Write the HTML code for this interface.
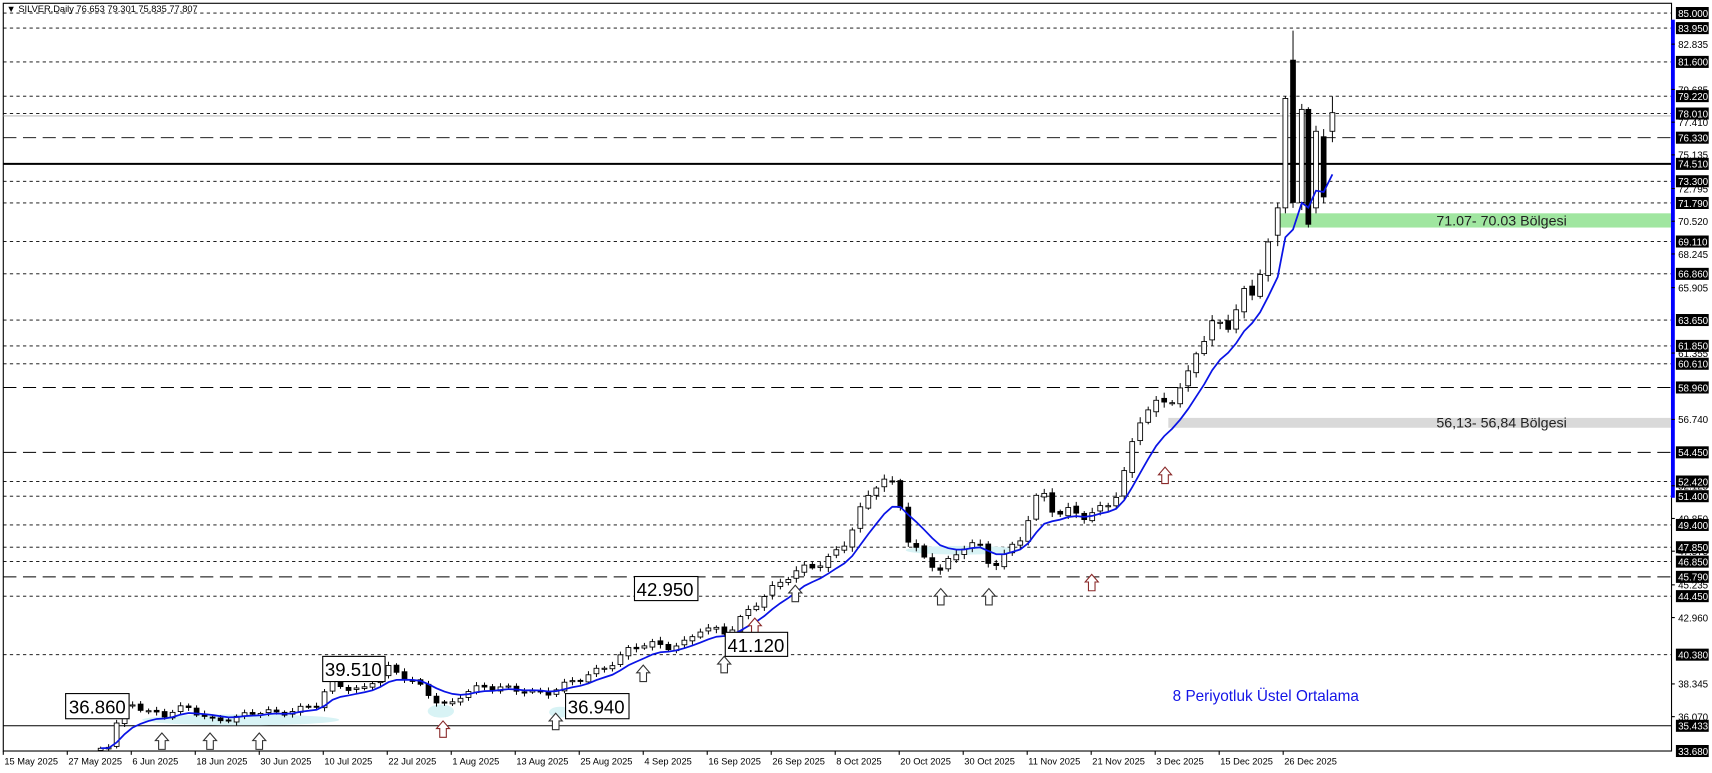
<!DOCTYPE html>
<html><head><meta charset="utf-8"><style>
html,body{margin:0;padding:0;background:#fff;overflow:hidden}
svg{display:block;font-family:"Liberation Sans",Tahoma,sans-serif}
</style></head><body>
<svg id="c" width="1712" height="773" viewBox="0 0 1565 706.6" preserveAspectRatio="none" xmlns="http://www.w3.org/2000/svg">
<rect x="0" y="0" width="1565" height="706.6" fill="#fff"/>
<!-- frame -->
<rect x="3" y="3" width="1525" height="683.5" fill="none" stroke="#000" stroke-width="1"/>
<g id="lines"></g>
<!-- zones -->
<rect x="1168" y="195" width="360" height="13" fill="#a0e6a0"/>
<text x="1313" y="206" font-size="13" fill="#222">71.07- 70.03 Bölgesi</text>
<rect x="1068" y="382" width="460" height="9" fill="#d9d9d9"/>
<text x="1313" y="391" font-size="13" fill="#222">56,13- 56,84 Bölgesi</text>
<!-- shaded cyan areas -->
<g fill="#d8f3f5">
<ellipse cx="220" cy="658" rx="90" ry="5"/>
<ellipse cx="403" cy="650" rx="12" ry="6"/>
<ellipse cx="512" cy="651" rx="10" ry="5"/>
<ellipse cx="880" cy="503" rx="52" ry="4"/>
</g>
<g id="candles"></g>
<polyline id="ema" fill="none" stroke="#0a14e6" stroke-width="1.6"/>
<g id="arrows"></g>
<!-- label boxes -->
<g font-size="17" fill="#000">
<rect x="60" y="634" width="58" height="23" fill="#fff" stroke="#000"/><text x="63" y="652">36.860</text>
<rect x="295" y="600" width="57" height="23" fill="#fff" stroke="#000"/><text x="297" y="618">39.510</text>
<rect x="580" y="527" width="58" height="22" fill="#fff" stroke="#000"/><text x="582" y="545">42.950</text>
<rect x="663" y="578" width="57" height="22" fill="#fff" stroke="#000"/><text x="665" y="596">41.120</text>
<rect x="517" y="634" width="58" height="23" fill="#fff" stroke="#000"/><text x="519" y="652">36.940</text>
</g>
<text x="1072" y="641" font-size="14" fill="#1414e6">8 Periyotluk Üstel Ortalama</text>
<text x="6" y="11" font-size="8.5" fill="#000">▼ SILVER,Daily  76.653 79.301 75.835 77.807</text>
<!-- blue bar -->
<rect x="1527.5" y="18" width="3.5" height="437" fill="#0000ff"/>
<g id="axis" font-size="9"></g>
<g id="dates" font-size="8.5" fill="#000"></g>
</svg>
<script>
(function(){
var NS="http://www.w3.org/2000/svg";
function el(t,a,p,txt){var e=document.createElementNS(NS,t);for(var k in a)e.setAttribute(k,a[k]);if(txt!=null)e.textContent=txt;p.appendChild(e);return e;}
function Y(p){return 686.5-(p-33.68)*13.145;}
var L=document.getElementById('lines');
var dotted=[85,83.95,81.6,79.22,78.01,73.3,71.79,69.11,66.86,63.65,61.85,60.61,52.42,51.4,49.4,47.85,46.85,44.45,40.38,33.68];
dotted.forEach(function(p){el('line',{x1:3,x2:1528,y1:Y(p),y2:Y(p),stroke:'#000','stroke-width':0.8,'stroke-dasharray':'3,3'},L);});
[76.33,58.96,54.45,45.79].forEach(function(p){el('line',{x1:3,x2:1528,y1:Y(p),y2:Y(p),stroke:'#000','stroke-width':0.9,'stroke-dasharray':'12,6'},L);});
el('line',{x1:3,x2:1528,y1:106,y2:106,stroke:'#aaa','stroke-width':0.8},L);
el('line',{x1:3,x2:1528,y1:Y(74.51),y2:Y(74.51),stroke:'#000','stroke-width':1.8},L);
el('line',{x1:3,x2:1528,y1:Y(35.433),y2:Y(35.433),stroke:'#000','stroke-width':0.9},L);
// axis
var A=document.getElementById('axis');
var plain=[82.835,79.685,77.41,75.135,72.795,70.52,68.245,65.905,61.355,56.74,52.125,49.85,47.575,45.235,42.96,38.345,36.07];
plain.forEach(function(p){var y=Y(p);el('line',{x1:1528,x2:1531,y1:y,y2:y,stroke:'#000'},A);el('text',{x:1534,y:y+3.5,fill:'#000'},A,p.toFixed(3));});
var boxed=[85,83.95,81.6,79.22,78.01,76.33,74.51,73.3,71.79,69.11,66.86,63.65,61.85,60.61,58.96,54.45,52.42,51.4,49.4,47.85,46.85,45.79,44.45,40.38,35.433,33.68];
boxed.forEach(function(p){var y=Y(p);el('rect',{x:1532,y:y-5.5,width:30,height:11,fill:'#000'},A);el('text',{x:1534,y:y+3.5,fill:'#fff'},A,p.toFixed(3));});
// dates
var D=document.getElementById('dates');
var ds=["15 May 2025","27 May 2025","6 Jun 2025","18 Jun 2025","30 Jun 2025","10 Jul 2025","22 Jul 2025","1 Aug 2025","13 Aug 2025","25 Aug 2025","4 Sep 2025","16 Sep 2025","26 Sep 2025","8 Oct 2025","20 Oct 2025","30 Oct 2025","11 Nov 2025","21 Nov 2025","3 Dec 2025","15 Dec 2025","26 Dec 2025"];
ds.forEach(function(s,i){var x=3+i*58.5;el('line',{x1:x,x2:x,y1:686.5,y2:690,stroke:'#000'},D);el('text',{x:x+1,y:699},D,s);});
// candles
var kp=[[92,684],[100,680],[110,650],[118,640],[125,645],[135,652],[150,655],[170,645],[180,650],[195,658],[215,658],[230,652],[245,650],[265,650],[290,645],[300,630],[305,622],[315,628],[330,630],[345,618],[355,612],[370,620],[385,628],[400,640],[410,645],[425,633],[440,630],[460,628],[480,630],[500,635],[515,628],[530,620],[545,612],[560,605],[575,595],[590,590],[610,590],[625,587],[640,575],[655,578],[665,580],[680,562],[695,545],[710,535],[720,528],[740,520],[760,508],[775,490],[785,470],[800,445],[810,440],[820,450],[830,490],[845,510],[860,520],[875,510],[885,495],[895,500],[905,515],[920,505],[935,490],[945,460],[955,455],[965,470],[980,465],[995,470],[1010,465],[1020,455],[1030,430],[1040,385],[1050,370],[1065,365],[1075,360],[1085,350],[1095,320],[1110,295],[1120,300],[1135,265],[1145,270],[1155,235],[1163,215]];
function ip(x){for(var i=1;i<kp.length;i++){if(x<=kp[i][0]){var a=kp[i-1],b=kp[i];return a[1]+(b[1]-a[1])*(x-a[0])/(b[0]-a[0]);}}return kp[kp.length-1][1];}
var bars=[],prev=686,i=0;
for(var x=92;x<1163;x+=7.31,i++){
 var base=ip(x),vol=2.5+(686-base)*0.012;
 var c=base+vol*(Math.sin(i*1.7)*0.8+Math.sin(i*0.63)*0.5);
 var o=prev+vol*0.3*Math.sin(i*2.3);
 var h=Math.min(o,c)-(1.5+vol*0.6*Math.abs(Math.sin(i*1.1)));
 var l=Math.max(o,c)+(1.5+vol*0.6*Math.abs(Math.cos(i*0.9)));
 bars.push([x,o,c,h,l]);prev=c;}
bars.push([1168,215,190,185,225],[1175,190,90,88,195],[1182,55,185,28,190],[1190,185,100,95,192],[1196,100,205,98,208],[1203,190,120,115,195],[1210,125,180,118,186],[1218,120,103,88,130]);
var C=document.getElementById('candles');
bars.forEach(function(b){
 var x=b[0],o=b[1],c=b[2];
 if(b[4]>686.5)b[4]=686.5; if(b[3]>686.5) return;
 el('line',{x1:x,x2:x,y1:b[3],y2:b[4],stroke:'#000','stroke-width':0.9},C);
 var top=Math.min(o,c),hh=Math.max(Math.abs(o-c),1);
 if(top+hh>686.5)hh=Math.max(686.5-top,1);
 el('rect',{x:x-2.2,y:top,width:4.4,height:hh,fill:(c<o?'#fff':'#000'),stroke:'#000','stroke-width':0.8},C);
});
// EMA
var k=2/9,e=bars[0][2],pts=[];
bars.forEach(function(b,j){e=j?b[2]*k+e*(1-k):b[2];pts.push(b[0].toFixed(1)+','+Math.min(e,686).toFixed(1));});
document.getElementById('ema').setAttribute('points',pts.join(' '));
// arrows
var Ar=document.getElementById('arrows');
[[148,670,0],[192,670,0],[237,670,0],[405,659,1],[508,652,0],[588,608,0],[662,600,0],[690,565,1],[727,535,0],[860,538,0],[904,538,0],[998,525,1],[1065,427,1]].forEach(function(a){
 var cx=a[0],t=a[1];
 el('polygon',{points:[cx,t,cx+6,t+7,cx+3,t+7,cx+3,t+15,cx-3,t+15,cx-3,t+7,cx-6,t+7].join(' '),fill:'#fff',stroke:a[2]?'#8a2a2a':'#333','stroke-width':1},Ar);
});
})();
</script>
</body></html>
